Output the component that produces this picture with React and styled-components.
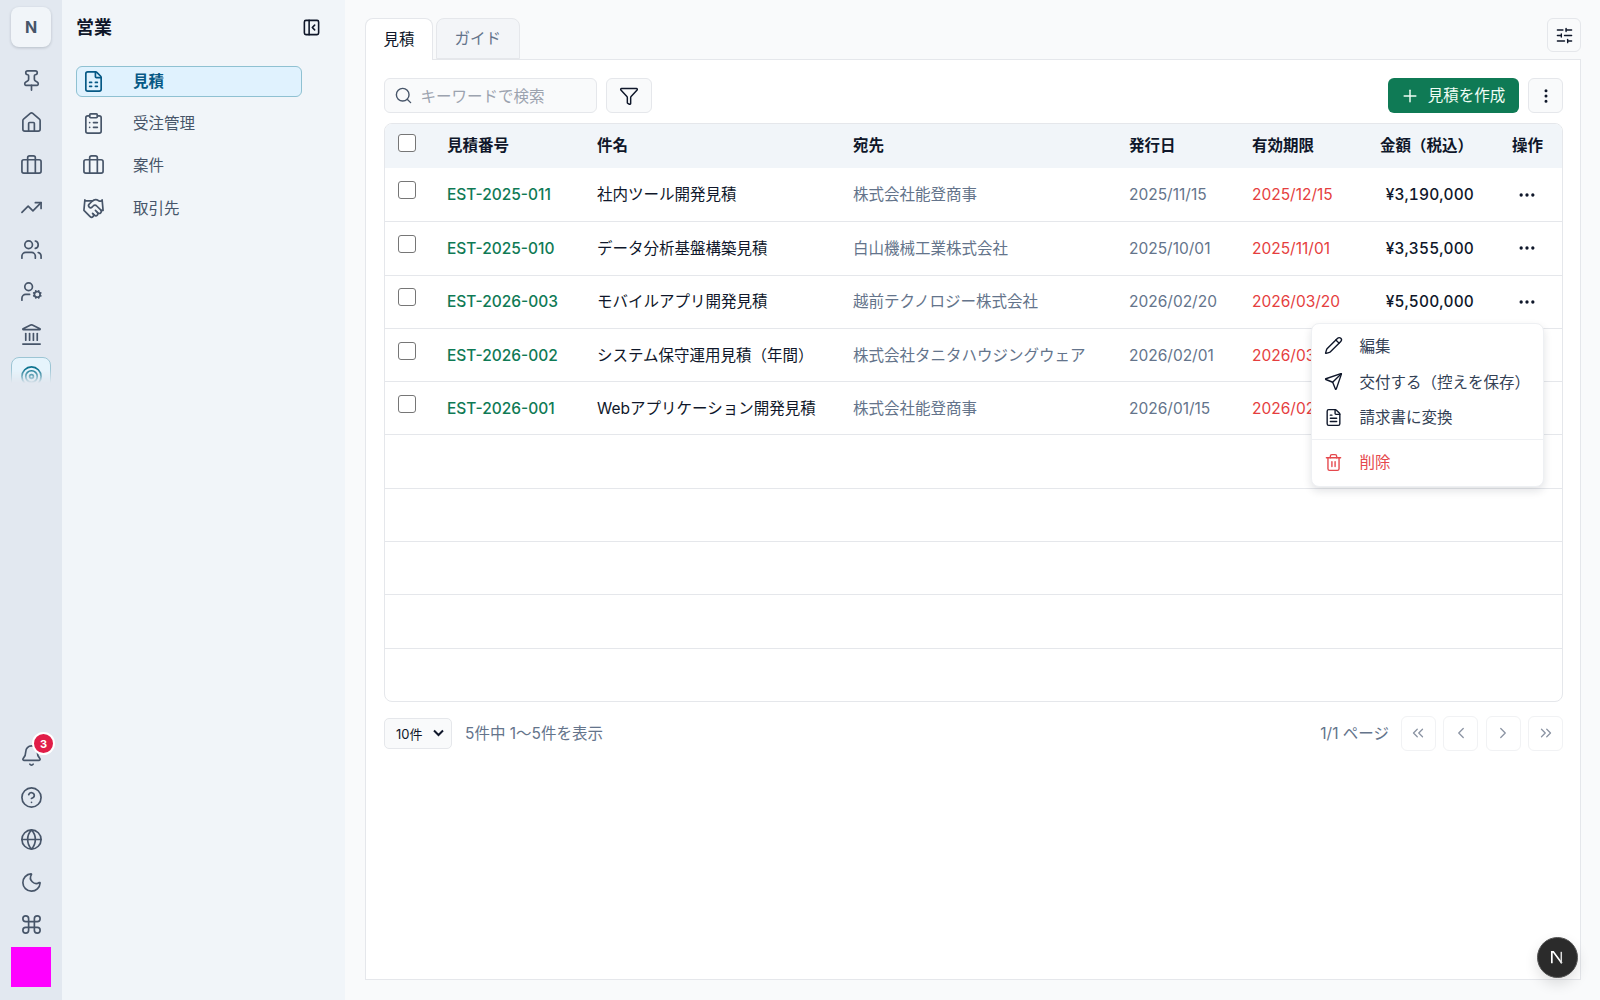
import React from "react";
import styled, { createGlobalStyle } from "styled-components";
import {
  Pin, House, Briefcase, TrendingUp, Users, UserCog, Landmark, Bell, CircleHelp, Globe, Moon, Command,
  FileSpreadsheet, ClipboardList, Handshake, PanelLeftClose, SlidersHorizontal, Search, Funnel, Plus,
  EllipsisVertical, Ellipsis, Pencil, Send, FileText, Trash2, ChevronsLeft, ChevronLeft, ChevronRight, ChevronsRight,
} from "lucide-react";

const GlobalStyle = createGlobalStyle`
  html, body { margin: 0; padding: 0; height: 100%; overflow: hidden; }
  body {
    font-family: Inter, "Noto Sans CJK JP", sans-serif;
    font-size: 15.5px;
    color: #0f172a;
    background: #f9fafb;
  }
  * { box-sizing: border-box; }
`;

const Page = styled.div`
  display: flex;
  width: 1600px;
  height: 1000px;
  overflow: hidden;
`;

const Rail = styled.aside`
  width: 62px;
  flex: none;
  height: 1000px;
  background: #e2e8f0;
  display: flex;
  flex-direction: column;
  align-items: center;
  padding-top: 7px;
  overflow: hidden;
`;
const Logo = styled.div`
  width: 40px;
  height: 40px;
  flex: none;
  border-radius: 8px;
  background: #f1f5f9;
  box-shadow: 0 1px 3px rgba(15, 23, 42, 0.2);
  display: flex;
  align-items: center;
  justify-content: center;
  font-size: 16px;
  font-weight: 700;
  color: #475569;
`;
const RailTop = styled.div`
  display: flex;
  flex-direction: column;
  align-items: center;
  gap: 2.3px;
  margin-top: 13.5px;
  height: 322px;
  overflow: hidden;
  flex: none;
  mask-image: linear-gradient(to bottom, #000 calc(100% - 14px), transparent);
`;
const RailBottom = styled.div`
  margin-top: auto;
  display: flex;
  flex-direction: column;
  align-items: center;
  gap: 2.4px;
  padding-bottom: 13px;
`;
const RailIcon = styled.div`
  position: relative;
  width: 40px;
  height: 40px;
  flex: none;
  display: flex;
  align-items: center;
  justify-content: center;
  color: #475569;
  border-radius: 8px;
  ${(p) => p.$active && `
    background: #e6f4fc;
    border: 1px solid #9cc5d4;
    color: #0e7490;
  `}
`;
const Badge = styled.span`
  position: absolute;
  top: -3px;
  right: -4px;
  width: 23px;
  height: 23px;
  border-radius: 50%;
  background: #e11d48;
  border: 2px solid #fff;
  color: #fff;
  font-size: 11px;
  font-weight: 700;
  display: flex;
  align-items: center;
  justify-content: center;
`;
const Magenta = styled.div`
  width: 40px;
  height: 40px;
  background: #ff00ff;
`;

const SidePanel = styled.nav`
  width: 283px;
  flex: none;
  background: #f1f5f9;
  padding: 0 24px 0 14px;
`;
const PanelHead = styled.div`
  height: 55px;
  display: flex;
  align-items: center;
  justify-content: space-between;
  color: #0f172a;
`;
const PanelTitle = styled.h2`
  margin: 0;
  padding-bottom: 3px;
  font-size: 18px;
  font-weight: 700;
`;
const NavList = styled.div`
  margin-top: 11px;
  width: 226px;
  display: flex;
  flex-direction: column;
  gap: 11.8px;
`;
const NavItem = styled.div`
  height: 30.5px;
  display: flex;
  align-items: center;
  gap: 28.5px;
  padding-left: 4.5px;
  border-radius: 6px;
  border: 1px solid ${(p) => (p.$active ? "#8fc1d2" : "transparent")};
  background: ${(p) => (p.$active ? "#e0f2fe" : "transparent")};
  color: ${(p) => (p.$active ? "#075985" : "#475569")};
  font-weight: ${(p) => (p.$active ? 700 : 400)};
  span {
    padding-bottom: 3px;
  }
`;

const Main = styled.main`
  flex: 1;
  min-width: 0;
  padding: 18px 19px 20px 20px;
  background: #f9fafb;
  display: flex;
  flex-direction: column;
`;
const TabBar = styled.div`
  display: flex;
  align-items: flex-start;
  gap: 3px;
  height: 41px;
  position: relative;
  z-index: 1;
`;
const Tab = styled.div`
  height: ${(p) => (p.$active ? "42px" : "41px")};
  padding: 0 17.5px 4px;
  display: flex;
  align-items: center;
  border: 1px solid #e5e7eb;
  border-bottom: ${(p) => (p.$active ? "none" : "1px solid #e5e7eb")};
  border-radius: 8px 8px 0 0;
  background: ${(p) => (p.$active ? "#fff" : "#f3f5f8")};
  color: ${(p) => (p.$active ? "#0f172a" : "#64748b")};
`;
const IconButton = styled.button`
  width: ${(p) => p.$w || 35}px;
  height: ${(p) => p.$h || 35}px;
  padding: 0;
  flex: none;
  display: flex;
  align-items: center;
  justify-content: center;
  background: ${(p) => (p.$muted ? "#fff" : "#f9fafb")};
  border: 1px solid ${(p) => (p.$muted ? "#f1f2f4" : "#e5e7eb")};
  border-radius: 6px;
  color: ${(p) => (p.$muted ? "#8b94a3" : "#0f172a")};
`;
const SettingsButton = styled(IconButton)`
  margin-left: auto;
`;
const Card = styled.section`
  flex: 1;
  background: #fff;
  border: 1px solid #e5e7eb;
  padding: 18px 17px 0 18px;
  display: flex;
  flex-direction: column;
  position: relative;
`;
const Toolbar = styled.div`
  display: flex;
  align-items: center;
  gap: 9px;
  height: 35px;
`;
const SearchBox = styled.div`
  width: 213px;
  height: 35px;
  display: flex;
  align-items: center;
  gap: 8px;
  padding-left: 8.5px;
  background: #f9fafb;
  border: 1px solid #e5e7eb;
  border-radius: 6px;
  color: #475569;
`;
const Placeholder = styled.span`
  color: #9ca3af;
  white-space: nowrap;
  padding-bottom: 2px;
`;
const Spacer = styled.div`
  flex: 1;
`;
const CreateButton = styled.button`
  width: 131px;
  height: 35px;
  display: flex;
  align-items: center;
  justify-content: center;
  gap: 8px;
  padding: 0 2px 0 0;
  border: none;
  border-radius: 6px;
  background: #0f7a55;
  color: #f0fdf4;
  font-family: inherit;
  font-size: 15.5px;
  white-space: nowrap;
  span {
    padding-bottom: 3px;
  }
`;

const TableWrap = styled.div`
  margin-top: 10px;
  border: 1px solid #e5e7eb;
  border-radius: 8px;
  overflow: hidden;
`;
const columns = "62px 150px 256px 276px 123px 128px 132px 50px";
const HeadRow = styled.div`
  display: grid;
  grid-template-columns: ${columns};
  align-items: center;
  height: 44px;
  background: #f1f5f9;
  font-weight: 700;
  color: #0f172a;
  span {
    padding-bottom: 4px;
    white-space: nowrap;
  }
`;
const Row = styled.div`
  display: grid;
  grid-template-columns: ${columns};
  align-items: center;
  height: 53.3px;
  border-top: ${(p) => (p.$first ? "none" : "1px solid #e5e7eb")};
`;
const CheckCell = styled.div`
  display: flex;
  padding-left: 12.5px;
  margin-top: ${(p) => (p.$head ? "-7px" : "-9px")};
`;
const Check = styled.i`
  display: block;
  width: 18px;
  height: 18px;
  border: 1px solid #767676;
  border-radius: 3px;
  background: #fff;
`;
const Code = styled.span`
  color: #0f7a55;
  font-weight: 500;
  white-space: nowrap;
`;
const Subject = styled.span`
  color: #0f172a;
  white-space: nowrap;
  padding-bottom: 3px;
`;
const Client = styled.span`
  color: #64748b;
  white-space: nowrap;
  padding-bottom: 3px;
`;
const Muted = styled.span`
  color: #64748b;
  white-space: nowrap;
`;
const Danger = styled.span`
  color: #e53e3e;
  white-space: nowrap;
`;
const Amount = styled.span`
  font-weight: 500;
  font-variant-numeric: tabular-nums;
  letter-spacing: 0.1px;
  text-align: right;
  padding-right: 38px;
  white-space: nowrap;
  color: #0f172a;
`;
const Actions = styled.span`
  display: flex;
  padding-left: 5px;
  color: #0f172a;
`;

const Footer = styled.div`
  display: flex;
  align-items: center;
  margin-top: 14px;
  height: 35px;
`;
const PerPage = styled.div`
  width: 68px;
  height: 31px;
  display: flex;
  align-items: center;
  justify-content: space-between;
  padding: 0 7px 0 11px;
  background: #f9fafb;
  border: 1px solid #e5e7eb;
  border-radius: 5px;
  font-size: 13px;
  color: #0f172a;
`;
const Info = styled.span`
  margin-left: 13px;
  padding-bottom: 2px;
  color: #64748b;
`;
const Pager = styled.div`
  display: flex;
  align-items: center;
  gap: 7.5px;
`;
const PageLabel = styled.span`
  color: #64748b;
  margin-right: 4px;
  padding-bottom: 2px;
`;

const Menu = styled.div`
  position: absolute;
  top: 263px;
  left: 945px;
  width: 233px;
  height: 164px;
  background: #fff;
  border: 1px solid #eef0f3;
  border-radius: 8px;
  box-shadow: 0 4px 8px rgba(15, 23, 42, 0.12);
  padding-top: 4px;
  z-index: 2;
`;
const MenuItem = styled.div`
  height: 35.8px;
  display: flex;
  align-items: center;
  gap: 17px;
  padding-left: 11.5px;
  color: ${(p) => (p.$danger ? "#e5484d" : "#334155")};
  white-space: nowrap;
  svg {
    color: ${(p) => (p.$danger ? "#e5484d" : "#0f172a")};
  }
  span {
    padding-bottom: 2px;
  }
`;
const MenuDivider = styled.div`
  height: 1px;
  background: #eef0f3;
  margin: 4px 0;
`;
const NextBadge = styled.div`
  position: fixed;
  left: 1537px;
  top: 937px;
  width: 41px;
  height: 41px;
  border-radius: 50%;
  background: #2b2b2b;
  border: 1px solid #555;
  box-shadow: 0 6px 14px rgba(0, 0, 0, 0.12);
  display: flex;
  align-items: center;
  justify-content: center;
`;

const ConcentricIcon = () => (
  <svg width="23" height="23" viewBox="0 0 24 24" fill="none" stroke="currentColor" strokeWidth="1.75">
    <circle cx="12" cy="12" r="10" />
    <circle cx="12" cy="12" r="6" />
    <circle cx="12" cy="12" r="2" />
  </svg>
);

const NextLogo = () => (
  <svg width="17" height="17" viewBox="0 0 18 18" fill="none">
    <path d="M3 15V3h1.6l9 12" stroke="#fff" strokeWidth="1.8" />
    <path d="M13 3v12" stroke="#ddd" strokeWidth="1.6" />
  </svg>
);

const topIcons = [Pin, House, Briefcase, TrendingUp, Users, UserCog, Landmark];
const bottomIcons = [CircleHelp, Globe, Moon, Command];
const navItems = [
  { icon: FileSpreadsheet, label: "見積", active: true },
  { icon: ClipboardList, label: "受注管理" },
  { icon: Briefcase, label: "案件" },
  { icon: Handshake, label: "取引先" },
];
const rows = [
  ["EST-2025-011", "社内ツール開発見積", "株式会社能登商事", "2025/11/15", "2025/12/15", "¥3,190,000"],
  ["EST-2025-010", "データ分析基盤構築見積", "白山機械工業株式会社", "2025/10/01", "2025/11/01", "¥3,355,000"],
  ["EST-2026-003", "モバイルアプリ開発見積", "越前テクノロジー株式会社", "2026/02/20", "2026/03/20", "¥5,500,000"],
  ["EST-2026-002", "システム保守運用見積（年間）", "株式会社タニタハウジングウェア", "2026/02/01", "2026/03/01", "¥1,980,000"],
  ["EST-2026-001", "Webアプリケーション開発見積", "株式会社能登商事", "2026/01/15", "2026/02/15", "¥2,750,000"],
];

export default function App() {
  return (
    <Page>
      <GlobalStyle />
      <Rail>
        <Logo>N</Logo>
        <RailTop>
          {topIcons.map((Icon, i) => (
            <RailIcon key={i}>
              <Icon size={23} strokeWidth={1.75} />
            </RailIcon>
          ))}
          <RailIcon $active>
            <ConcentricIcon />
          </RailIcon>
        </RailTop>
        <RailBottom>
          <RailIcon>
            <Bell size={23} strokeWidth={1.75} />
            <Badge>3</Badge>
          </RailIcon>
          {bottomIcons.map((Icon, i) => (
            <RailIcon key={i}>
              <Icon size={23} strokeWidth={1.75} />
            </RailIcon>
          ))}
          <Magenta />
        </RailBottom>
      </Rail>

      <SidePanel>
        <PanelHead>
          <PanelTitle>営業</PanelTitle>
          <PanelLeftClose size={19} strokeWidth={2} />
        </PanelHead>
        <NavList>
          {navItems.map(({ icon: Icon, label, active }) => (
            <NavItem key={label} $active={active}>
              <Icon size={23} strokeWidth={1.75} />
              <span>{label}</span>
            </NavItem>
          ))}
        </NavList>
      </SidePanel>

      <Main>
        <TabBar>
          <Tab $active>見積</Tab>
          <Tab>ガイド</Tab>
          <SettingsButton $w={34} $h={34}>
            <SlidersHorizontal size={19} strokeWidth={1.75} />
          </SettingsButton>
        </TabBar>
        <Card>
          <Toolbar>
            <SearchBox>
              <Search size={19} strokeWidth={1.75} />
              <Placeholder>キーワードで検索</Placeholder>
            </SearchBox>
            <IconButton $w={46}>
              <Funnel size={20} strokeWidth={1.75} />
            </IconButton>
            <Spacer />
            <CreateButton>
              <Plus size={20} strokeWidth={1.75} />
              <span>見積を作成</span>
            </CreateButton>
            <IconButton>
              <EllipsisVertical size={18} strokeWidth={2} />
            </IconButton>
          </Toolbar>

          <TableWrap>
            <HeadRow>
              <CheckCell $head><Check /></CheckCell>
              <span>見積番号</span>
              <span>件名</span>
              <span>宛先</span>
              <span>発行日</span>
              <span>有効期限</span>
              <span>金額（税込）</span>
              <span>操作</span>
            </HeadRow>
            {rows.map((r, i) => (
              <Row key={r[0]} $first={i === 0}>
                <CheckCell><Check /></CheckCell>
                <Code>{r[0]}</Code>
                <Subject>{r[1]}</Subject>
                <Client>{r[2]}</Client>
                <Muted>{r[3]}</Muted>
                <Danger>{r[4]}</Danger>
                <Amount>{r[5]}</Amount>
                <Actions><Ellipsis size={20} strokeWidth={2} /></Actions>
              </Row>
            ))}
            {[0, 1, 2, 3, 4].map((i) => (
              <Row key={i} />
            ))}
          </TableWrap>

          <Footer>
            <PerPage>
              10件
              <svg width="11" height="8" viewBox="0 0 11 8" fill="none" stroke="#0f172a" strokeWidth="2">
                <path d="M1 1.5l4.5 4.5L10 1.5" />
              </svg>
            </PerPage>
            <Info>5件中 1〜5件を表示</Info>
            <Spacer />
            <Pager>
              <PageLabel>1/1 ページ</PageLabel>
              <IconButton $muted><ChevronsLeft size={18} strokeWidth={1.75} /></IconButton>
              <IconButton $muted><ChevronLeft size={18} strokeWidth={1.75} /></IconButton>
              <IconButton $muted><ChevronRight size={18} strokeWidth={1.75} /></IconButton>
              <IconButton $muted><ChevronsRight size={18} strokeWidth={1.75} /></IconButton>
            </Pager>
          </Footer>

          <Menu>
            <MenuItem><Pencil size={19} strokeWidth={1.75} /><span>編集</span></MenuItem>
            <MenuItem><Send size={19} strokeWidth={1.75} /><span>交付する（控えを保存）</span></MenuItem>
            <MenuItem><FileText size={19} strokeWidth={1.75} /><span>請求書に変換</span></MenuItem>
            <MenuDivider />
            <MenuItem $danger><Trash2 size={19} strokeWidth={1.75} /><span>削除</span></MenuItem>
          </Menu>
        </Card>
      </Main>
      <NextBadge><NextLogo /></NextBadge>
    </Page>
  );
}
